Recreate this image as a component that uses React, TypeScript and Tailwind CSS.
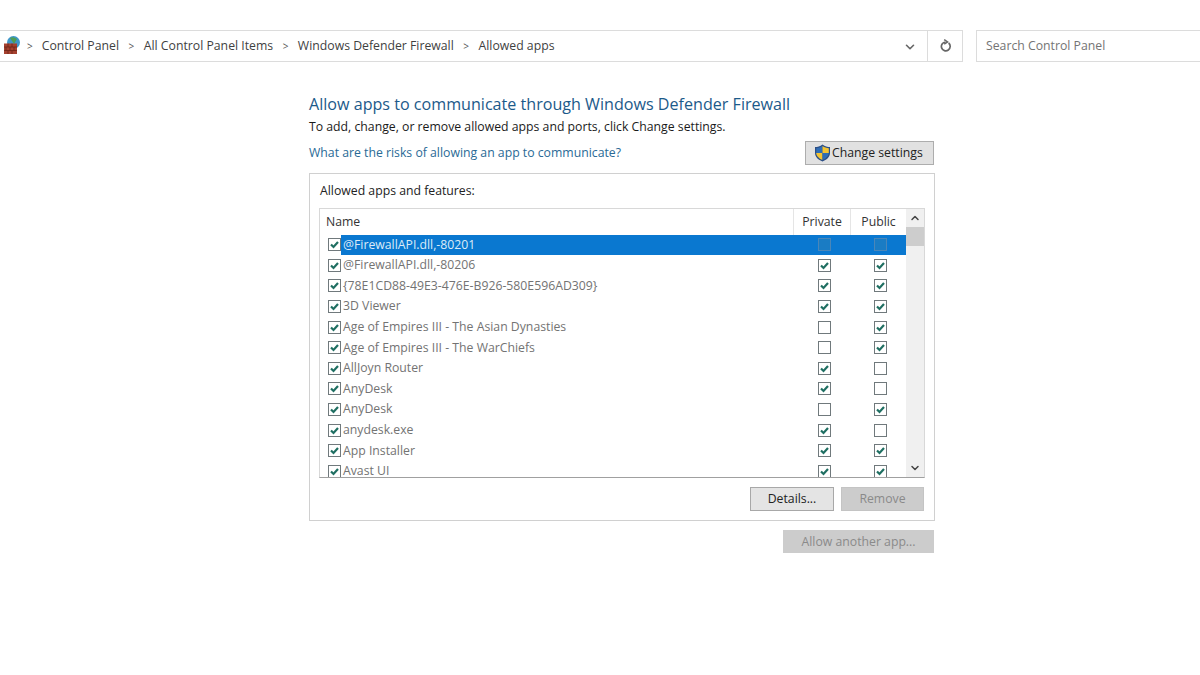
import { ChevronDown, ChevronUp } from 'lucide-react';

const apps: [string, boolean, boolean][] = [
  ['@FirewallAPI.dll,-80201', false, false],
  ['@FirewallAPI.dll,-80206', true, true],
  ['{78E1CD88-49E3-476E-B926-580E596AD309}', true, true],
  ['3D Viewer', true, true],
  ['Age of Empires III - The Asian Dynasties', false, true],
  ['Age of Empires III - The WarChiefs', false, true],
  ['AllJoyn Router', true, false],
  ['AnyDesk', true, false],
  ['AnyDesk', false, true],
  ['anydesk.exe', true, false],
  ['App Installer', true, true],
  ['Avast UI', true, true],
];

function Check({ on, dim }: { on: boolean; dim?: boolean }) {
  if (dim) return <div className="w-[13px] h-[13px] border border-[#4a86b8] bg-[#1a7cc4]" />;
  return (
    <div className="w-[13px] h-[13px] border border-[#70797c] bg-white flex items-center justify-center shrink-0">
      {on && (
        <svg width="11" height="11" viewBox="0 0 11 11">
          <path d="M2 5.5 L4.5 8 L9 3" fill="none" stroke="#1f6f62" strokeWidth="2.2" />
        </svg>
      )}
    </div>
  );
}

function FirewallIcon() {
  return (
    <svg width="20" height="20" viewBox="0 0 20 20" className="shrink-0">
      <circle cx="12.5" cy="6.5" r="6.5" fill="#3f97c9" />
      <path d="M9 2 Q12 0 16 3 L13 8 Z" fill="#4f9e55" />
      <rect x="3" y="7.5" width="13" height="10.5" fill="#a5412f" />
      <path d="M3 11H16M3 14.5H16M7 7.5V11M11 7.5V11M5 11V14.5M9 11V14.5M13 11V14.5M7 14.5V18M11 14.5V18" stroke="#6d2417" strokeWidth="0.8" />
    </svg>
  );
}

function ShieldIcon() {
  return (
    <svg width="17" height="18" viewBox="0 0 17 18" className="shrink-0">
      <path d="M8.5 0.5 C6 2.5 3.5 3 1 3 V9 C1 13 4.5 16 8.5 17.5 C12.5 16 16 13 16 9 V3 C13.5 3 11 2.5 8.5 0.5 Z" fill="#2c4f86" />
      <path d="M8.5 2 V9 H2.2 V4.2 C4.5 4 6.5 3.4 8.5 2 Z" fill="#2f6db5" />
      <path d="M8.5 2 C10.5 3.4 12.5 4 14.8 4.2 V9 H8.5 Z" fill="#f3c332" />
      <path d="M2.2 9 H8.5 V16 C5.5 14.8 2.6 12.5 2.2 9 Z" fill="#f3c332" />
      <path d="M8.5 9 H14.8 C14.4 12.5 11.5 14.8 8.5 16 Z" fill="#2f6db5" />
    </svg>
  );
}

function RefreshIcon() {
  return (
    <svg width="12" height="14" viewBox="0 0 12 14" className="shrink-0">
      <path d="M8.6 4 A4.4 4.4 0 1 1 5.5 3" fill="none" stroke="#666" strokeWidth="1.7" />
      <path d="M4.2 0.6 L7.6 3 L4.2 5.2" fill="none" stroke="#666" strokeWidth="1.5" />
    </svg>
  );
}

function Sep() {
  return <span className="text-[#555] text-[10px] mx-[9.5px]">&gt;</span>;
}

export default function App() {
  return (
    <div className="w-[1200px] h-[675px] bg-white overflow-hidden text-[12.25px] text-[#3f3f3f] font-['Open_Sans','Liberation_Sans',sans-serif]">
      <div className="flex pt-[30px] h-[62px]">
        <div className="w-[963px] h-[32px] border border-l-0 border-[#dcdcdc] flex items-center">
          <div className="flex items-center flex-1 pl-px">
            <FirewallIcon />
            <span className="text-[#555] text-[10px] ml-[6px] mr-[9px]">&gt;</span>
            <span>Control Panel</span>
            <Sep />
            <span>All Control Panel Items</span>
            <Sep />
            <span>Windows Defender Firewall</span>
            <Sep />
            <span>Allowed apps</span>
          </div>
          <div className="w-[34px] h-full flex items-center justify-center pt-[2px]">
            <ChevronDown size={14} strokeWidth={2.8} className="text-[#666]" />
          </div>
          <div className="w-[35px] h-full border-l border-[#dcdcdc] flex items-center justify-center pl-[1px]">
            <RefreshIcon />
          </div>
        </div>
        <div className="ml-[13px] flex-1 h-[32px] border border-r-0 border-[#dcdcdc] flex items-center pl-[9px] text-[#747474]">
          Search Control Panel
        </div>
      </div>

      <div className="ml-[309px] w-[625px] pt-[31px]">
        <div className="text-[16.13px] leading-[22px] text-[#1c5a8a]">Allow apps to communicate through Windows Defender Firewall</div>
        <div className="mt-[4px] leading-[16px] text-[#1a1a1a]">To add, change, or remove allowed apps and ports, click Change settings.</div>
        <div className="mt-[6px] flex items-center justify-between">
          <span className="text-[#2a6a96]">What are the risks of allowing an app to communicate?</span>
          <div className="w-[129px] h-[24px] bg-[#e1e1e1] border border-[#adadad] flex items-center pl-[8px] gap-px text-[#222]">
            <ShieldIcon />
            <span>Change settings</span>
          </div>
        </div>

        <div className="mt-[8px] w-[626px] h-[348px] border border-[#d0d0d0] pl-[9px] pt-[9px]">
          <div className="pl-px leading-[16px] text-[#222]">Allowed apps and features:</div>
          <div className="mt-[9px] h-[270px] w-[606px] border border-[#d8d8d8] border-b-[#a0a0a0] flex overflow-hidden">
            <div className="flex-1 min-w-0">
              <div className="flex h-[25.5px] items-center text-[#333]">
                <div className="flex-1 pl-[6px]">Name</div>
                <div className="w-[57px] h-full flex items-center justify-center border-l border-[#e5e5e5]">Private</div>
                <div className="w-[56px] h-full flex items-center justify-center border-l border-[#e5e5e5]">Public</div>
              </div>
              {apps.map(([name, pri, pub], i) => (
                <div key={i} className="flex items-center h-[20.6px]">
                  <div className="w-[21px] flex justify-end shrink-0 pl-[7px]">
                    <Check on />
                  </div>
                  <div className={i === 0 ? 'flex flex-1 h-full items-center bg-[#0a78d0] text-[#dcebf7]' : 'flex flex-1 h-full items-center text-[#737373]'}>
                    <div className="flex-1 pl-[2px] whitespace-nowrap">{name}</div>
                    <div className="w-[57px] flex justify-center pl-[5px]"><Check on={pri} dim={i === 0} /></div>
                    <div className="w-[56px] flex justify-center pl-[5px]"><Check on={pub} dim={i === 0} /></div>
                  </div>
                </div>
              ))}
            </div>
            <div className="w-[18px] shrink-0 bg-[#f0f0f0] flex flex-col items-center">
              <div className="h-[18px] flex items-center justify-center">
                <ChevronUp size={12} strokeWidth={3} className="text-[#444]" />
              </div>
              <div className="w-full h-[19px] bg-[#cdcdcd]" />
              <div className="flex-1" />
              <div className="h-[18px] flex items-center justify-center">
                <ChevronDown size={12} strokeWidth={3} className="text-[#444]" />
              </div>
            </div>
          </div>
          <div className="mt-[9px] flex justify-end gap-[7px] w-[605px]">
            <div className="w-[84px] h-[24px] bg-[#e4e4e4] border border-[#a8a8a8] flex items-center justify-center text-[#222]">Details...</div>
            <div className="w-[83px] h-[24px] bg-[#cccccc] border border-[#c4c4c4] flex items-center justify-center text-[#8a8a8a]">Remove</div>
          </div>
        </div>

        <div className="mt-[9px] flex justify-end">
          <div className="w-[151px] h-[23px] bg-[#cccccc] flex items-center justify-center pt-px text-[#8a8a8a]">Allow another app...</div>
        </div>
      </div>
    </div>
  );
}
